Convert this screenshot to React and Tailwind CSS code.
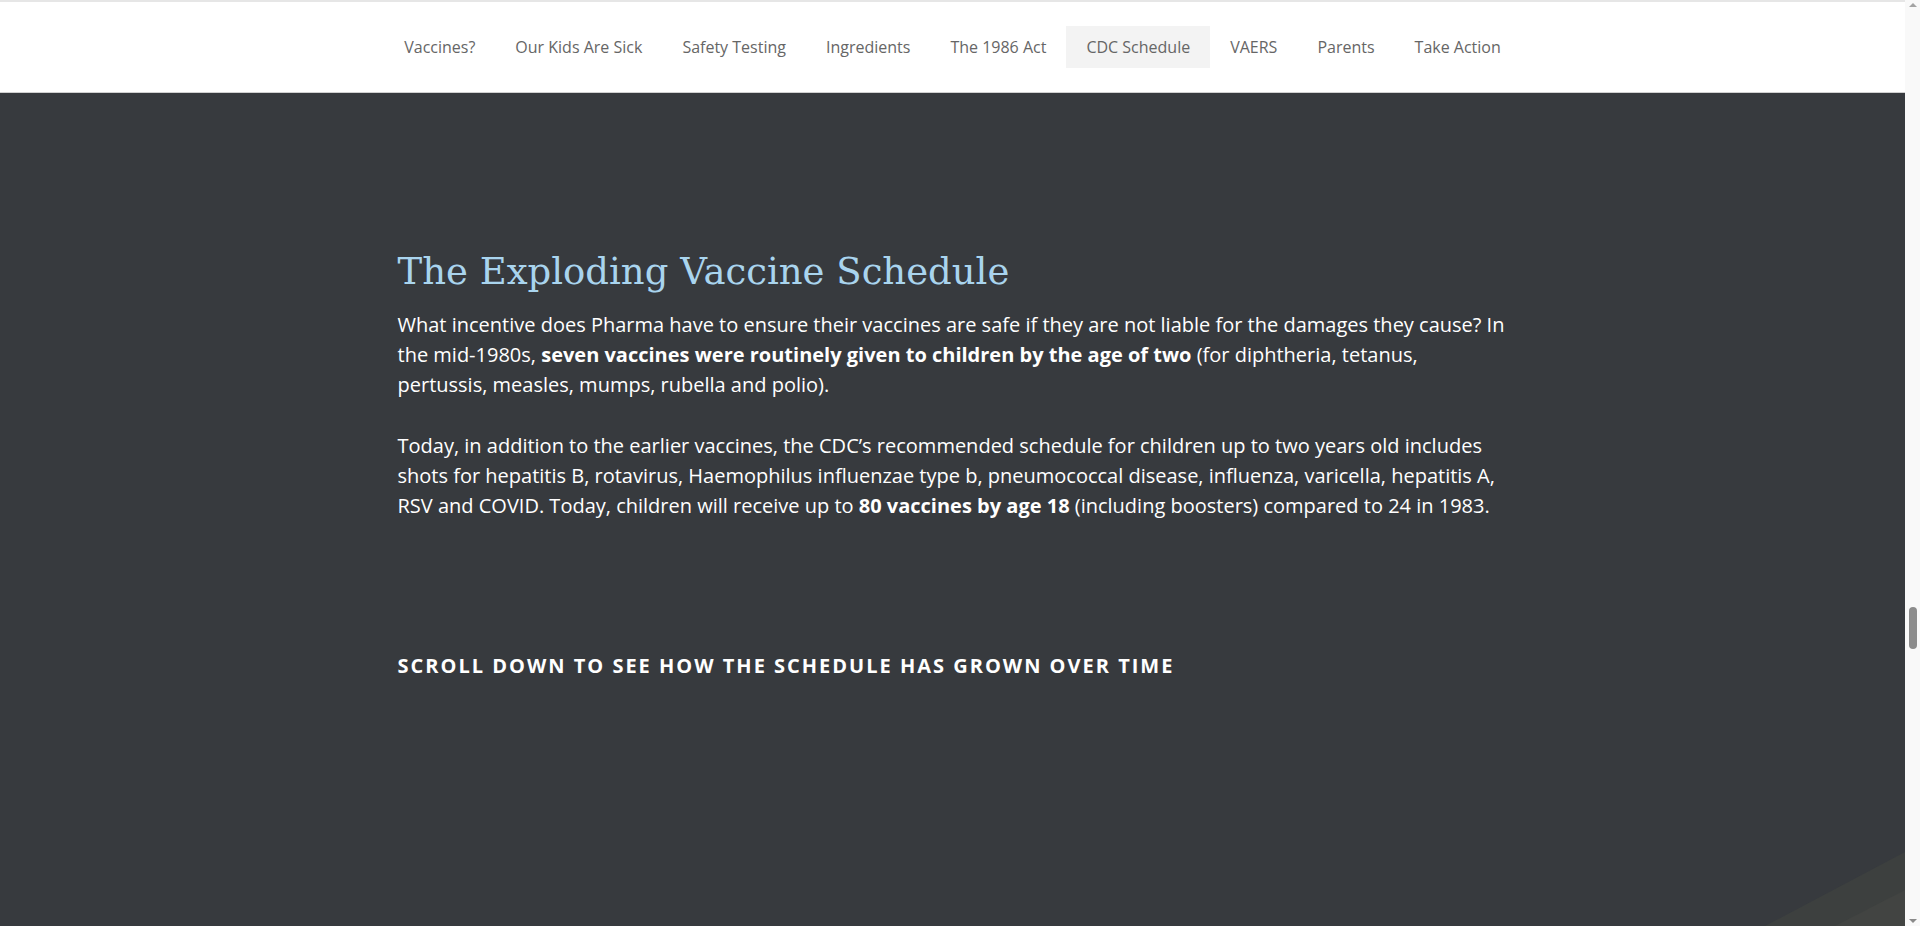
import React from 'react';

const navItems = [
  'Vaccines?',
  'Our Kids Are Sick',
  'Safety Testing',
  'Ingredients',
  'The 1986 Act',
  'CDC Schedule',
  'VAERS',
  'Parents',
  'Take Action',
];

function Nav() {
  return (
    <nav className="h-[93px] bg-white border-t-2 border-[#e6e6e6] border-b border-b-[#d0d0d0] flex items-center justify-center">
      <ul className="flex items-center">
        {navItems.map((item) => (
          <li
            key={item}
            className={`px-5 h-[42px] flex items-center text-[16px] text-[#666] ${item === 'CDC Schedule' ? 'bg-[#f3f3f3]' : ''}`}
          >
            {item}
          </li>
        ))}
      </ul>
    </nav>
  );
}

function Scrollbar() {
  return (
    <div className="w-[15px] h-[926px] bg-[#f9f9f9] flex flex-col items-center justify-between py-[3px] shrink-0">
      <div className="w-0 h-0 border-l-[4px] border-r-[4px] border-b-[4px] border-l-transparent border-r-transparent border-b-[#a3a3a3]" />
      <div className="w-[8px] h-[42px] rounded-full bg-[#8c8c8c] mt-[600px]" />
      <div className="flex-1" />
      <div className="w-0 h-0 border-l-[4px] border-r-[4px] border-t-[4px] border-l-transparent border-r-transparent border-t-[#8a8a8a]" />
    </div>
  );
}

export default function App() {
  return (
    <div className="flex w-[1920px] h-[926px] overflow-hidden" style={{ fontFamily: '"Open Sans", sans-serif' }}>
      <div className="flex-1 flex flex-col">
        <Nav />
        <main className="relative flex-1 bg-[#373a3e] overflow-hidden">
          <div className="max-w-[1140px] mx-auto px-[15px] pt-[157px]">
            <h1
              className="text-[37px] leading-[44px] text-[#a9d4ee] mb-[16px]"
              style={{ fontFamily: '"DejaVu Serif", serif' }}
            >
              The Exploding Vaccine Schedule
            </h1>
            <p className="text-[20px] leading-[30px] text-white mb-[31px]">
              What incentive does Pharma have to ensure their vaccines are safe if they are not liable for the damages they cause? In the mid-1980s, <strong className="font-bold">seven vaccines were routinely given to children by the age of two</strong> (for diphtheria, tetanus, pertussis, measles, mumps, rubella and polio).
            </p>
            <p className="text-[20px] leading-[30px] text-white">
              Today, in addition to the earlier vaccines, the CDC’s recommended schedule for children up to two years old includes shots for hepatitis B, rotavirus, Haemophilus influenzae type b, pneumococcal disease, influenza, varicella, hepatitis A, RSV and COVID. Today, children will receive up to <strong className="font-bold">80 vaccines by age 18</strong> (including boosters) compared to 24 in 1983.
            </p>
            <h3 className="mt-[130px] text-[20px] leading-[30px] font-bold text-white uppercase tracking-[2px]">
              Scroll down to see how the schedule has grown over time
            </h3>
          </div>
          <svg className="absolute right-0 bottom-0" width="140" height="80" viewBox="0 0 140 80">
            <polygon points="0,80 140,6 140,80" fill="#3d403f" />
            <polygon points="70,80 140,44 140,80" fill="#424442" />
          </svg>
        </main>
      </div>
      <Scrollbar />
    </div>
  );
}
